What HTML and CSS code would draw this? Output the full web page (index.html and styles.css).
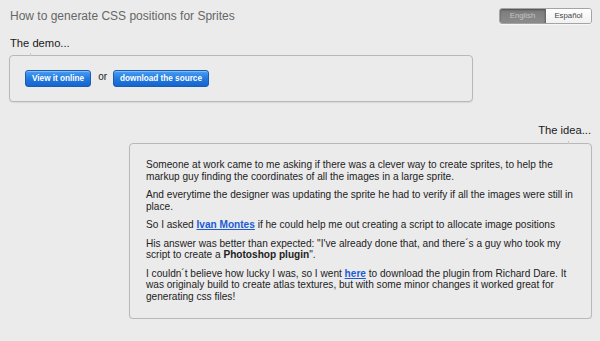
FILE: index.html
```html
<!DOCTYPE html>
<html>
<head>
  <meta charset="UTF-8">
  <title>How to generate CSS positions for Sprites</title>
  <link rel="stylesheet" href="styles.css">
</head>
<body>
  <div class="page">
    <div class="top">
      <h1 class="title">How to generate CSS positions for Sprites</h1>
      <div class="lang">
        <a href="#" class="lang-btn active">English</a>
        <a href="#" class="lang-btn">Español</a>
      </div>
    </div>

    <div class="section demo">
      <h2>The demo...</h2>
      <div class="panel">
        <a href="#" class="btn">View it online</a>
        <span class="or">or</span>
        <a href="#" class="btn">download the source</a>
      </div>
    </div>

    <div class="section idea">
      <h2>The idea...</h2>
      <div class="panel">
        <p>Someone at work came to me asking if there was a clever way to create sprites, to help the markup guy finding the coordinates of all the images in a large sprite.</p>
        <p>And everytime the designer was updating the sprite he had to verify if all the images were still in place.</p>
        <p>So I asked <a href="#">Ivan Montes</a> if he could help me out creating a script to allocate image positions</p>
        <p>His answer was better than expected: "I've already done that, and there´s a guy who took my script to create a <b>Photoshop plugin</b>".</p>
        <p>I couldn´t believe how lucky I was, so I went <a href="#">here</a> to download the plugin from Richard Dare. It was originaly build to create atlas textures, but with some minor changes it worked great for generating css files!</p>
      </div>
    </div>
  </div>
</body>
</html>
```

FILE: styles.css
```css
body {
  margin: 0;
  background: #ebebeb;
  font-family: "Liberation Sans", Arial, sans-serif;
  color: #222;
}
.page {
  padding: 8px 8px 0 9px;
}
.top {
  display: flex;
  justify-content: space-between;
  align-items: center;
  height: 15px;
}
.title {
  margin: 0 0 0 1px;
  font-size: 12px;
  font-weight: normal;
  color: #666;
}
.lang {
  display: flex;
  border: 1px solid #a4a4a4;
  border-radius: 3px;
  overflow: hidden;
  height: 14px;
  box-shadow: 0 1px 0 rgba(255, 255, 255, 0.6);
}
.lang-btn {
  display: block;
  width: 45px;
  font-size: 7.8px;
  line-height: 14px;
  text-align: center;
  text-decoration: none;
  color: #444;
  background: linear-gradient(#fff, #f1f1f1);
}
.lang-btn.active {
  color: #c4c4c4;
  background: linear-gradient(#7a7a7a, #8c8c8c);
  box-shadow: inset 0 1px 2px rgba(0, 0, 0, 0.35);
  border-right: 1px solid #6a6a6a;
}

.section h2 {
  margin: 0;
  font-size: 11.2px;
  line-height: 12px;
  font-weight: normal;
  color: #1a1a1a;
}
.panel {
  position: relative;
  box-sizing: border-box;
  border: 1px solid #b8b8b8;
  border-radius: 4px;
  background: #ebebeb;
  box-shadow: 0 1px 1px rgba(0, 0, 0, 0.08);
}
/* little tick pointing at the heading */
.panel:before {
  content: "";
  position: absolute;
  top: -3px;
  width: 1px;
  height: 3px;
  background: #c8c8c8;
}

.demo {
  margin-top: 14px;
}
.demo h2 {
  margin: 0 0 6px 1px;
}
.demo .panel {
  width: 464px;
  height: 47px;
  padding: 0 15px;
  display: flex;
  align-items: center;
}
.demo .panel:before {
  left: 20px;
}
.btn {
  display: block;
  height: 15px;
  padding: 0 6px;
  border: 1px solid #1a5bb4;
  border-radius: 3px;
  background: linear-gradient(#4a9ff2, #237ae0 50%, #1565cc);
  box-shadow: inset 0 1px 0 rgba(255, 255, 255, 0.3);
  color: #fff;
  font-size: 8.2px;
  font-weight: bold;
  line-height: 15px;
  text-decoration: none;
}
.or {
  margin: 0 6px 0 7px;
  font-size: 10px;
  position: relative;
  top: -2px;
}

.idea {
  margin-top: 22px;
}
.idea h2 {
  text-align: right;
  margin: 0 1px 7px 0;
}
.idea .panel {
  width: 463px;
  margin-left: auto;
  padding: 15px 14px 16px 16px;
}
.idea .panel:before {
  right: 22px;
}
.idea p {
  margin: 0 0 7px 0;
  font-size: 10.1px;
  line-height: 11.5px;
  color: #222;
}
.idea p:last-child {
  margin-bottom: 0;
}
.idea a {
  color: #1d5bd6;
  font-weight: bold;
}
```
